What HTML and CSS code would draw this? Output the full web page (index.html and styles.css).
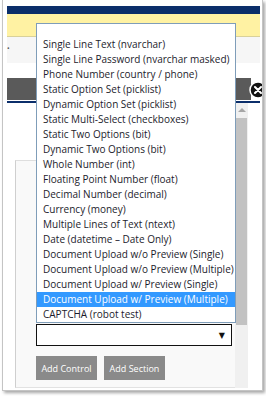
FILE: index.html
```html
<!DOCTYPE html>
<html>
<head>
<meta charset="utf-8">
<link rel="stylesheet" href="styles.css">
</head>
<body>
<div class="frame">
  <div class="top-space"></div>
  <div class="navy-bar"></div>
  <div class="notice"></div>
  <div class="crumb"><span class="dot">•</span></div>
  <div class="white-gap"></div>
  <div class="dark-bar"></div>
  <div class="navy-line"></div>
  <div class="scroll-area">
    <div class="content">
      <div class="panel">
        <div class="select-box"><span class="arrow">▼</span></div>
        <div class="buttons">
          <button class="btn">Add Control</button>
          <button class="btn">Add Section</button>
        </div>
      </div>
    </div>
    <div class="scrollbar">
      <div class="sb-up"></div>
      <div class="sb-thumb"></div>
    </div>
    <div class="right-gap"></div>
  </div>
  <div class="close-btn">
    <svg width="18" height="18" viewBox="0 0 18 18">
      <circle cx="9" cy="9" r="8" fill="#111" stroke="#fff" stroke-width="1.5"/>
      <path d="M6 6 L12 12 M12 6 L6 12" stroke="#fff" stroke-width="2" stroke-linecap="round"/>
    </svg>
  </div>
</div>
<ul class="options">
  <li class="blank"></li>
  <li>Single Line Text (nvarchar)</li>
  <li>Single Line Password (nvarchar masked)</li>
  <li>Phone Number (country / phone)</li>
  <li>Static Option Set (picklist)</li>
  <li>Dynamic Option Set (picklist)</li>
  <li>Static Multi-Select (checkboxes)</li>
  <li>Static Two Options (bit)</li>
  <li>Dynamic Two Options (bit)</li>
  <li>Whole Number (int)</li>
  <li>Floating Point Number (float)</li>
  <li>Decimal Number (decimal)</li>
  <li>Currency (money)</li>
  <li>Multiple Lines of Text (ntext)</li>
  <li>Date (datetime – Date Only)</li>
  <li>Document Upload w/o Preview (Single)</li>
  <li>Document Upload w/o Preview (Multiple)</li>
  <li>Document Upload w/ Preview (Single)</li>
  <li class="selected">Document Upload w/ Preview (Multiple)</li>
  <li>CAPTCHA (robot test)</li>
</ul>
</body>
</html>
```
FILE: styles.css
```css
html, body {
  margin: 0;
  padding: 0;
  background: #fff;
  width: 266px;
  height: 396px;
  overflow: hidden;
  font-family: "Open Sans", "DejaVu Sans", sans-serif;
}
.frame {
  position: relative;
  margin-left: 2px;
  width: 261px;
  height: 391px;
  box-sizing: border-box;
  border: 1px solid #c4c4c4;
  border-top: none;
  padding: 0 2px 0 4px;
  box-shadow: 2px 2px 3px rgba(0,0,0,0.35);
  overflow: hidden;
  background: #fff;
  display: flex;
  flex-direction: column;
}
.top-space { height: 6px; flex: none; }
.navy-bar { height: 8px; background: #0b2e6a; flex: none; }
.notice { height: 22px; background: #fff2a3; border-bottom: 1px solid #d9d19a; flex: none; }
.crumb { height: 26px; background: #f6f6f6; flex: none; position: relative; }
.dot { position: absolute; left: 0; top: 8px; font-size: 7px; color: #555; line-height: 8px; }
.white-gap { height: 15px; flex: none; }
.dark-bar { height: 22px; background: #5a5a5a; margin-right: 9px; flex: none; }
.navy-line { height: 2px; margin-top: 1px; background: #0b2e6a; flex: none; }
.scroll-area {
  height: 285px;
  display: flex;
  flex: none;
}
.content {
  width: 228px;
  padding-top: 57px;
  display: flex;
  flex-direction: column;
}
.panel {
  flex: 1;
  margin-left: 8px;
  border-left: 1px solid #cfcfcf;
  border-top: 1px solid #dedede;
  border-bottom: 1px solid #e2e2e2;
  background: #f9f9f9;
  padding-left: 20px;
  padding-top: 163px;
}
.select-box {
  width: 196px;
  height: 22px;
  box-sizing: border-box;
  border: 1px solid #111;
  background: #fff;
  position: relative;
}
.arrow {
  position: absolute;
  right: 6px;
  top: 4px;
  font-size: 8px;
  line-height: 12px;
  color: #111;
}
.buttons {
  display: flex;
  gap: 7px;
  margin-top: 10px;
}
.btn {
  width: 61px;
  height: 24px;
  border: none;
  padding: 0;
  background: #8a8a8a;
  color: #fff;
  font-family: "Open Sans", "DejaVu Sans", sans-serif;
  font-size: 9px;
}
.scrollbar {
  width: 13px;
  background: #f0f0f0;
  display: flex;
  flex-direction: column;
}
.sb-up {
  height: 15px;
  position: relative;
}
.sb-up::after {
  content: "";
  position: absolute;
  left: 3px;
  top: 5px;
  border-left: 4px solid transparent;
  border-right: 4px solid transparent;
  border-bottom: 4px solid #a6a6a6;
}
.sb-thumb {
  height: 207px;
  background: #c2c2c2;
  margin: 0 1px;
}
.right-gap { flex: 1; }
.close-btn {
  position: absolute;
  left: 246px;
  top: 81px;
  width: 18px;
  height: 18px;
}
.close-btn svg { display: block; }
.options {
  position: absolute;
  left: 36px;
  top: 23px;
  width: 200px;
  height: 300px;
  box-sizing: border-box;
  margin: 0;
  padding: 0;
  list-style: none;
  border: 1px solid #7f9db9;
  background: #fff;
  font-size: 10px;
  color: #1c1c2c;
}
.options li {
  height: 15px;
  line-height: 15px;
  padding-left: 6px;
  white-space: nowrap;
}
.options li.blank { height: 13px; }
.options li.selected { background: #3399ff; color: #fff; }
```
